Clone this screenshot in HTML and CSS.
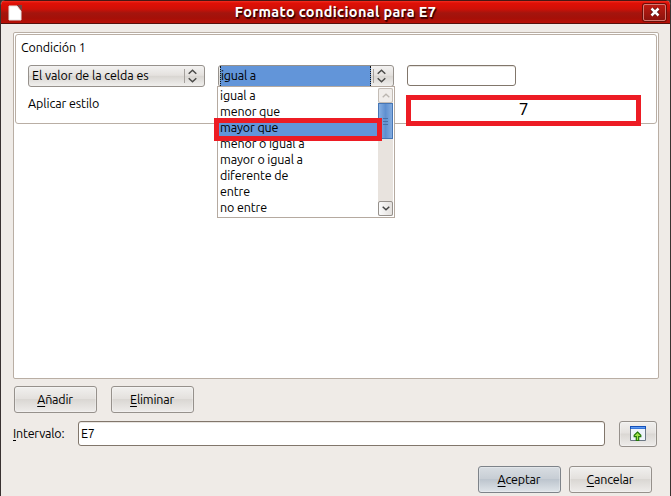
FILE: index.html
```
<!DOCTYPE html>
<html lang="es">
<head>
<meta charset="utf-8">
<title>Formato condicional para E7</title>
<link rel="stylesheet" href="styles.css">
</head>
<body>
<div class="dialog">
  <header class="titlebar">
    <svg class="doc" width="14" height="16" viewBox="0 0 14 16"><path d="M1 1h8l4 5v9H1z" fill="#fff" stroke="#e4e4e4"/><path d="M9 0h5v6z" fill="#704543"/></svg>
    <h1><span class="t-title">Formato condicional para E7</span></h1>
    <button class="close" aria-label="Cerrar"><svg width="10" height="10" viewBox="0 0 10 10"><path d="M1.8 1.8l6.4 6.4M8.2 1.8L1.8 8.2" stroke="#4b0d0a" stroke-width="4"/><path d="M1.5 1.5l7 7M8.5 1.5l-7 7" stroke="#fff" stroke-width="2.5"/></svg></button>
  </header>
  <main>
    <section class="conditions">
      <div class="condition">
        <div class="heading"><span class="t-cond">Condición 1</span></div>
        <div class="row">
          <div class="select"><span class="value t-cell">El valor de la celda es</span><i class="sep"></i><svg width="9" height="14" viewBox="0 0 9 14"><path d="M.7 4.8l3.8-3.6 3.8 3.6M.7 9.2l3.8 3.6 3.8-3.6" fill="none" stroke="#4b4b49" stroke-width="1.5"/></svg></div>
          <div class="select open">
            <span class="value picked"><span class="t-eq">igual a</span></span><i class="sep"></i><svg width="9" height="14" viewBox="0 0 9 14"><path d="M.7 4.8l3.8-3.6 3.8 3.6M.7 9.2l3.8 3.6 3.8-3.6" fill="none" stroke="#4b4b49" stroke-width="1.5"/></svg>
            <div class="menu">
              <ul>
                <li>igual a</li><li>menor que</li><li class="on">mayor que</li><li>menor o igual a</li><li>mayor o igual a</li><li>diferente de</li><li>entre</li><li>no entre</li>
              </ul>
              <div class="scroll">
                <div class="arrow off"><svg width="8" height="5" viewBox="0 0 8 5"><path d="M.7 4.2L4 1.2l3.3 3" fill="none" stroke="#bbb6b0" stroke-width="1.3"/></svg></div>
                <div class="thumb"><i></i><i></i><i></i></div>
                <div class="track"></div>
                <div class="arrow"><svg width="8" height="5" viewBox="0 0 8 5"><path d="M.7.8L4 3.8l3.3-3" fill="none" stroke="#444" stroke-width="1.5"/></svg></div>
              </div>
              <div class="mark mark-item"></div>
            </div>
          </div>
          <div class="field"></div>
        </div>
        <div class="style-row"><span class="t-style">Aplicar estilo</span></div>
        <div class="mark mark-preview"><span>7</span></div>
      </div>
    </section>
    <div class="actions"><button class="btn"><span class="t-add"><u>A</u>ñadir</span></button><button class="btn"><span class="t-del"><u>E</u>liminar</span></button></div>
    <div class="range"><label><span class="t-range"><u>I</u>ntervalo:</span></label><div class="field wide">E7</div>
      <button class="btn shrink" aria-label="Reducir"><svg width="16" height="16" viewBox="0 0 16 16"><path d="M.5 1v13.500h15V1z" fill="#eef4fa" stroke="#6c7885"/><path d="M0 0h16v3H0z" fill="#1450b8"/><path d="M1 1h14v1.500H1z" fill="#5d9cf5"/><path d="M7.500 6L10.800 9.300v1.400H8.700V14.500H6.300v-3.800H4.200V9.300z" fill="#a0e548" stroke="#23780b" stroke-width="1.200"/></svg></button>
    </div>
    <footer><button class="btn default"><span class="t-ok"><u>A</u>ceptar</span></button><button class="btn"><span class="t-cancel"><u>C</u>ancelar</span></button></footer>
  </main>
</div>
</body>
</html>
```

FILE: styles.css
```
* { box-sizing: border-box; }
body { margin: 0; width: 671px; height: 496px; overflow: hidden; background: #393231; color: #000; font: 12.5px/16px "Ubuntu", "Noto Sans", sans-serif; letter-spacing: -.2px; }
button { font: inherit; letter-spacing: inherit; color: inherit; padding: 0; }
span { white-space: nowrap; }
.dialog { height: 496px; border: solid #393231; border-width: 0 1px 0 1px; border-radius: 5px 5px 0 0; overflow: hidden; background: #efebe7; }
.titlebar { height: 24px; display: flex; align-items: center; padding: 0 4px 0 7px; border-top: 1px solid #471714; border-bottom: 1px solid #54110d; background: linear-gradient(#f22d20 0, #e01006 2px, #cf1007 8px, #a3150e 12px, #a51008 17px, #b90e05 22px); }
.titlebar .doc { margin-top: 2px; }
.titlebar h1 { flex: 1; margin: 0; padding-left: 6px; text-align: center; color: #fff; font-size: 14.5px; letter-spacing: .32px; line-height: 18px; padding-bottom: 1px; text-shadow: 1px 1px 1px #300, 1px 2px 1px #400; }
.close { width: 23px; height: 17px; display: grid; place-items: center; border: 1px solid #d47b73; border-radius: 2px; background: linear-gradient(#bd1b12, #8c130d); box-shadow: 0 0 0 1px #6b0e09; }
main { padding: 8px 12px 0; }
.conditions { width: 646px; height: 347px; padding: 1px; border: 1px solid #b9aea4; border-radius: 2px; background: #fff; }
.condition { position: relative; height: 90px; padding: 4px 5px; border: 1px solid #b9aea4; border-radius: 3px; }
.heading { height: 26px; line-height: 16px; }
.t-cond, .t-cell, .t-style { letter-spacing: -.08px; }
.row { display: flex; padding-left: 7px; }
.select { position: relative; width: 177px; height: 22px; display: flex; align-items: center; padding: 0 7px 0 3px; border: 1px solid #96918c; border-radius: 3px; background: linear-gradient(#f3f2f1, #e4e1de 47%, #d8d5d1 50%, #f0efed); }
.select .value { flex: 1; line-height: 17px; padding-bottom: 2px; }
.sep { width: 1px; height: 14px; margin-right: 3px; background: #a5a19d; }
.select + .open { width: 176px; margin-left: 13px; }
.select .picked { height: 20px; padding: 0; margin-left: -2px; margin-right: 2px; line-height: 19px; background: #6295d9; border: dotted #111; border-width: 0 1px; }
.menu { position: absolute; z-index: 2; left: -2px; top: 20px; width: 178px; height: 132px; display: flex; padding: 1px; border: 1px solid #b5aaa0; background: #fff; color: #000; }
.menu ul { flex: 1; margin: 0; padding: 0; list-style: none; letter-spacing: -.12px; }
.menu li { height: 16px; padding-left: 1px; line-height: 14px; white-space: nowrap; }
.menu .on { background: #6295d9; }
.scroll { width: 15px; display: flex; flex-direction: column; background: #e8e3de; }
.arrow { height: 15px; display: grid; place-items: center; border: 1px solid #96918c; border-radius: 2px; background: linear-gradient(90deg, #fafafa, #e4e1de); }
.arrow.off { border-color: #c3bcb5; background: #f0edea; }
.thumb { height: 36px; display: flex; flex-direction: column; align-items: center; justify-content: center; gap: 2px; border: 1px solid #4776b4; background: linear-gradient(90deg, #86afe3, #5f90d0 50%, #82abdf); }
.thumb i { width: 5px; height: 1px; background: #466fa7; }
.track { flex: 1; }
.field { width: 109px; height: 21px; margin-left: 13px; border: 1px solid #81766b; border-radius: 3px; background: #fff; box-shadow: inset 0 1px #e8e5e1; }
.style-row { padding: 8px 0 0 7px; }
.mark { position: absolute; border: 5px solid #ed1c24; }
.mark-item { left: -4px; top: 31px; width: 168px; height: 23px; }
.mark-preview { left: 390px; top: 60px; width: 235px; height: 31px; background: #fff; text-align: center; font: 16px/19px "Noto Sans", sans-serif; }
.actions { display: flex; gap: 14px; padding: 7px 1px 0; }
.btn { width: 83px; height: 27px; display: grid; place-items: center; border: 1px solid #96918c; border-radius: 3px; background: linear-gradient(#f1f0ee, #e4e1de 46%, #dad7d3 50%, #eeecea); box-shadow: inset 0 0 0 1px #fff4; }
.btn span { margin: 0 0 2px -1px; }
u { text-decoration: underline; text-underline-offset: 2px; }
.range { display: flex; padding-top: 8px; }
.range label { width: 65px; line-height: 24px; }
.wide { width: 527px; height: 25px; margin: 0; padding-left: 2px; line-height: 23px; }
.shrink { width: 38px; height: 26px; margin-left: 14px; }
footer { display: flex; justify-content: flex-end; gap: 8px; padding: 19px 6px 0; }
.default { background: linear-gradient(#d8dde2, #c8ced5 46%, #bdc5ce 50%, #dfe4e9); border-color: #7e8389; }
```
